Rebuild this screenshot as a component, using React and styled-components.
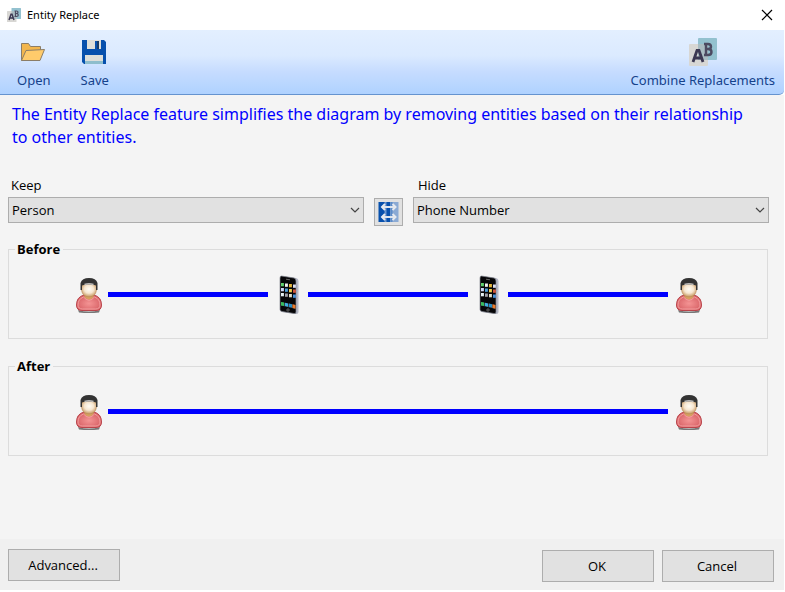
import React, { useId, useState } from "react";
import styled, { createGlobalStyle } from "styled-components";

const GlobalStyle = createGlobalStyle`
  * { box-sizing: border-box; }
  body {
    margin: 0;
    background: #fff;
    color: #000;
    font: 13px/20px "Open Sans", "Noto Sans", sans-serif;
  }
  button, select { font: inherit; color: inherit; }
`;

const Window = styled.div`
  min-height: 100vh;
  display: flex;
  flex-direction: column;
  padding: 0 1px 2px 0;
  background: #fff;
`;

const TitleBar = styled.header`
  display: flex;
  align-items: center;
  gap: 6px;
  height: 30px;
  padding: 0 8px 1px 7px;
`;

const Title = styled.h1`
  flex: 1;
  margin: 0;
  font-size: 11px;
  line-height: 16px;
  font-weight: 400;
  font-family: "Noto Sans", sans-serif;
`;

const CloseButton = styled.button`
  display: grid;
  place-items: center;
  width: 18px;
  height: 18px;
  padding: 0;
  border: 0;
  background: none;
`;

const Toolbar = styled.div`
  display: flex;
  gap: 30px;
  height: 65px;
  padding: 8px 9px 0 17px;
  border-bottom: 1px solid #6593cf;
  border-radius: 0 0 5px 0;
  background: linear-gradient(#e3efff 0%, #dbeaff 40%, #c6dcff 65%, #afd2ff 100%);
`;

const ToolButton = styled.button`
  display: flex;
  flex-direction: column;
  align-items: center;
  gap: 5px;
  padding: 0;
  border: 0;
  background: none;
  color: #15428b;
  font: 13px/18px "Noto Sans", sans-serif;
  white-space: nowrap;
  margin-left: ${(p) => (p.$end ? "auto" : "0")};
`;

const Content = styled.main`
  flex: 1;
  display: flex;
  flex-direction: column;
  padding: 8px 15px 8px 8px;
  background: #f4f4f4;
`;

const Intro = styled.p`
  margin: 0;
  padding: 0 16px 0 4px;
  color: #0000ff;
  font-size: 16px;
  line-height: 23px;
  font-family: "Noto Sans", sans-serif;
`;

const Filters = styled.div`
  display: grid;
  grid-template-columns: 1fr 29px 1fr;
  column-gap: 10px;
  align-items: end;
  margin: 26px 0 13px;
`;

const FieldBox = styled.div`
  display: flex;
  flex-direction: column;
  gap: 2px;
  padding-bottom: 3px;
`;

const Label = styled.label`
  padding-left: ${(p) => (p.$inset ? "5px" : "3px")};
`;

const SelectWrap = styled.div`
  display: grid;
  align-items: center;
  > * { grid-area: 1 / 1; }
  > svg { justify-self: end; margin-right: 4px; pointer-events: none; }
`;

const Select = styled.select`
  appearance: none;
  width: 100%;
  height: 26px;
  padding: 0 20px 0 3px;
  border: 1px solid #adadad;
  border-radius: 0;
  background: #e1e1e1;
`;

const SwapButton = styled.button`
  display: grid;
  place-items: center;
  height: 28px;
  padding: 0;
  border: 1px solid #adadad;
  background: #e1e1e1;
`;

const Group = styled.fieldset`
  min-width: 0;
  margin: 0 1px 17px 0;
  padding: 0;
  border: 1px solid #dcdcdc;
`;

const Legend = styled.legend`
  margin-left: 6px;
  padding: 0 3px 0 2px;
  font-weight: 700;
`;

const Chain = styled.div`
  display: flex;
  align-items: center;
  padding: 16px 59px 23px;
`;

const Node = styled.span`
  display: grid;
  place-items: center;
  width: 40px;
  height: 40px;
  padding-left: 2px;
`;

const Link = styled.span`
  flex: 1;
  height: 5px;
  margin-bottom: 1px;
  background: #0000ff;
`;

const Footer = styled.footer`
  display: flex;
  gap: 8px;
  padding: 10px 10px 8px 8px;
  background: #f0f0f0;
`;

const Button = styled.button`
  width: 112px;
  height: 32px;
  padding: 0 2px 0 0;
  border: 1px solid #adadad;
  background: #e1e1e1;
  margin: ${(p) => (p.$first ? "0 auto 0 0" : "1px 0 0")};
`;

function AbIcon({ size }) {
  return (
    <svg width={size} height={size} viewBox="0 0 28 28" aria-hidden="true">
      <rect x="9" y="0" width="19" height="22" rx="1" fill="#93c1cf" />
      <rect x="0" y="6" width="19" height="22" rx="1" fill="#d8d7d4" />
      <rect x="9" y="6" width="10" height="16" fill="#a9bcc2" />
      <path d="M15 6h4q3 0 3 2.700q0 2.300-3 2.300q3.500 0 3.500 3q0 3-3.500 3H15M17 6v11M17 11h3" fill="none" stroke="#4c4a61" strokeWidth="2.400" />
      <path d="M4 24L8 12.500h2L14 24M6 20h6" fill="none" stroke="#3c3852" strokeWidth="2.800" />
    </svg>
  );
}

function FolderIcon() {
  return (
    <svg width="28" height="28" viewBox="0 0 28 28" aria-hidden="true">
      <path d="M1.500 22.500V5.500h7l2 3h10v4" fill="#f2b64e" stroke="#8b7d67" />
      <path d="M1.500 22.500L6 12.500l18.500-1-4.500 11z" fill="#ffcb6b" stroke="#8b7d67" />
    </svg>
  );
}

function SaveIcon() {
  return (
    <svg width="28" height="28" viewBox="0 0 28 28" aria-hidden="true">
      <path d="M1 2h22l2 2v22H3l-2-2z" fill="#0750ad" />
      <path d="M6 2h14v9H6z" fill="#deded9" />
      <path d="M14 3h4v8h-4z" fill="#0750ad" />
      <path d="M16 3h2v8h-2z" fill="#193b65" />
      <path d="M4 17h18v9H4z" fill="#deded9" />
      <path d="M4 23h18v3H4z" fill="#8ebdcc" />
    </svg>
  );
}

function CloseIcon() {
  return (
    <svg width="12" height="12" viewBox="0 0 12 12" aria-hidden="true">
      <path d="M1 1l10 10M11 1L1 11" stroke="#000" strokeWidth="1.200" />
    </svg>
  );
}

function Chevron() {
  return (
    <svg width="10" height="6" viewBox="0 0 10 6" aria-hidden="true">
      <path d="M1 1l4 4 4-4" fill="none" stroke="#444" strokeWidth="1.200" />
    </svg>
  );
}

function SwapIcon() {
  return (
    <svg width="21" height="20" viewBox="0 0 20 20" aria-hidden="true">
      <path d="M0 0h12v20H0z" fill="#0750ad" />
      <path d="M12 0h8v20h-8z" fill="#8baad4" />
      <path d="M6 0h2v20H6z" fill="#6b95ce" />
      <path d="M12 0h2v20h-2z" fill="#5b8bc9" />
      <path d="M4 5h12M4 15h12" stroke="#dfe5ee" strokeWidth="2" />
      <path d="M6.500 2L3.500 5l3 3M14 2l3 3-3 3M6.500 12l-3 3 3 3M14 12l3 3-3 3" fill="none" stroke="#e6e9ee" strokeWidth="2" />
    </svg>
  );
}

function PersonIcon() {
  const id = useId();
  return (
    <svg width="28" height="38" viewBox="0 0 28 38" role="img" aria-label="Person">
      <defs>
        <radialGradient id={`${id}face`} cx=".5" cy=".4" r=".62">
          <stop offset="0" stopColor="#fffdf6" />
          <stop offset=".5" stopColor="#f6e6d0" />
          <stop offset="1" stopColor="#c08d50" />
        </radialGradient>
        <radialGradient id={`${id}body`} cx=".5" cy=".55" r=".6">
          <stop offset="0" stopColor="#f49494" />
          <stop offset="1" stopColor="#d45b60" />
        </radialGradient>
      </defs>
      <path d="M3 34q11 3 22 0l-1 2.500q-10 1-20 0z" fill="#777" />
      <path d="M9 19Q1.500 21 1.500 29Q1.500 34.500 7 34.500H21Q26.500 34.500 26.500 29Q26.500 21 19 19z" fill={`url(#${id}body)`} stroke="#b9444b" />
      <path d="M8.500 21Q3 23 3 29Q3 33 7.500 33H20.500Q25 33 25 29Q25 23 19.500 21Q14 27.500 8.500 21z" fill="none" stroke="#f7aaaa" strokeWidth=".8" />
      <path d="M9.500 18v3q4.500 5 9 0v-3z" fill="#d6a25e" />
      <path d="M6.500 8v6q1 7 7.500 7t7.500-7V8z" fill={`url(#${id}face)`} stroke="#b98a57" strokeWidth=".6" />
      <path d="M5.500 14V7Q7 2 14 2t8.500 5v7H21V9.500Q14 7 7 9.500V14z" fill="#333" />
      <path d="M9.500 8.500Q14 7 18.500 8.500" fill="none" stroke="#bbb" strokeWidth="1.500" />
    </svg>
  );
}

const APP_COLOURS = [
  "#5fd06d", "#f3f3f3", "#e9b93c", "#d9dcef",
  "#cfd7f8", "#4da0dd", "#efd052", "#d2553e",
  "#e6f1f5", "#9f9fa7", "#e6e0cb", "#4d95dd",
];

function PhoneIcon() {
  return (
    <svg width="24" height="40" viewBox="0 0 24 40" role="img" aria-label="Phone number">
      <path d="M5 1l14 2q2.500 .3 2.500 3v31q0 2.500-3 2L5 37q-2-.4-2-2V3q0-2 2-2z" fill="#b3b6c4" />
      <path d="M4.500 1l12.500 2q2 .3 2 3v31q0 2-2 1.500L5 36.500q-2-.4-2-2V3q0-2 1.500-2z" fill="#060608" stroke="#84868f" strokeWidth=".7" />
      <path d="M9 4.200l4 .6" stroke="#666" />
      {APP_COLOURS.map((c, i) => {
        const col = i % 4;
        const row = Math.floor(i / 4);
        return <rect key={i} x={4 + col * 4} y={8 + row * 5 + col / 2} width="2.900" height="3.300" fill={c} />;
      })}
      <path d="M4 27l15 3v4L4 30.500z" fill="#31424e" />
      <path d="M4 27l3 .6v3.300l-3-.5z" fill="#39be5b" />
      <path d="M8 27.800l3 .6v3.300l-3-.6z" fill="#3fafe0" />
      <path d="M12 28.600l3 .6v3.300l-3-.6z" fill="#2a91c7" />
      <path d="M15.500 29.300l3 .6v3.800l-3-.6z" fill="#ef7a29" />
      <circle cx="11" cy="35" r="1.200" fill="none" stroke="#888" strokeWidth=".7" />
    </svg>
  );
}

const ENTITIES = ["Person", "Phone Number"];

function EntityField({ id, label, value, onChange, inset }) {
  return (
    <FieldBox>
      <Label htmlFor={id} $inset={inset}>{label}</Label>
      <SelectWrap>
        <Select id={id} value={value} onChange={(e) => onChange(e.target.value)}>
          {ENTITIES.map((name) => <option key={name}>{name}</option>)}
        </Select>
        <Chevron />
      </SelectWrap>
    </FieldBox>
  );
}

function Diagram({ title, entities }) {
  return (
    <Group>
      <Legend>{title}</Legend>
      <Chain>
        {entities.map((name, i) => (
          <React.Fragment key={i}>
            {i > 0 && <Link />}
            <Node>{name === "Person" ? <PersonIcon /> : <PhoneIcon />}</Node>
          </React.Fragment>
        ))}
      </Chain>
    </Group>
  );
}

export default function App() {
  const [keep, setKeep] = useState("Person");
  const [hide, setHide] = useState("Phone Number");
  const swap = () => {
    setKeep(hide);
    setHide(keep);
  };

  return (
    <Window>
      <GlobalStyle />
      <TitleBar>
        <AbIcon size={14} />
        <Title>Entity Replace</Title>
        <CloseButton aria-label="Close"><CloseIcon /></CloseButton>
      </TitleBar>
      <Toolbar role="toolbar">
        <ToolButton><FolderIcon />Open</ToolButton>
        <ToolButton><SaveIcon />Save</ToolButton>
        <ToolButton $end><AbIcon size={28} />Combine Replacements</ToolButton>
      </Toolbar>
      <Content>
        <Intro>
          The Entity Replace feature simplifies the diagram by removing entities based on their relationship to other entities.
        </Intro>
        <Filters>
          <EntityField id="keep" label="Keep" value={keep} onChange={setKeep} />
          <SwapButton aria-label="Swap" onClick={swap}><SwapIcon /></SwapButton>
          <EntityField id="hide" label="Hide" value={hide} onChange={setHide} inset />
        </Filters>
        <Diagram title="Before" entities={[keep, hide, hide, keep]} />
        <Diagram title="After" entities={[keep, keep]} />
      </Content>
      <Footer>
        <Button $first>Advanced...</Button>
        <Button>OK</Button>
        <Button>Cancel</Button>
      </Footer>
    </Window>
  );
}
